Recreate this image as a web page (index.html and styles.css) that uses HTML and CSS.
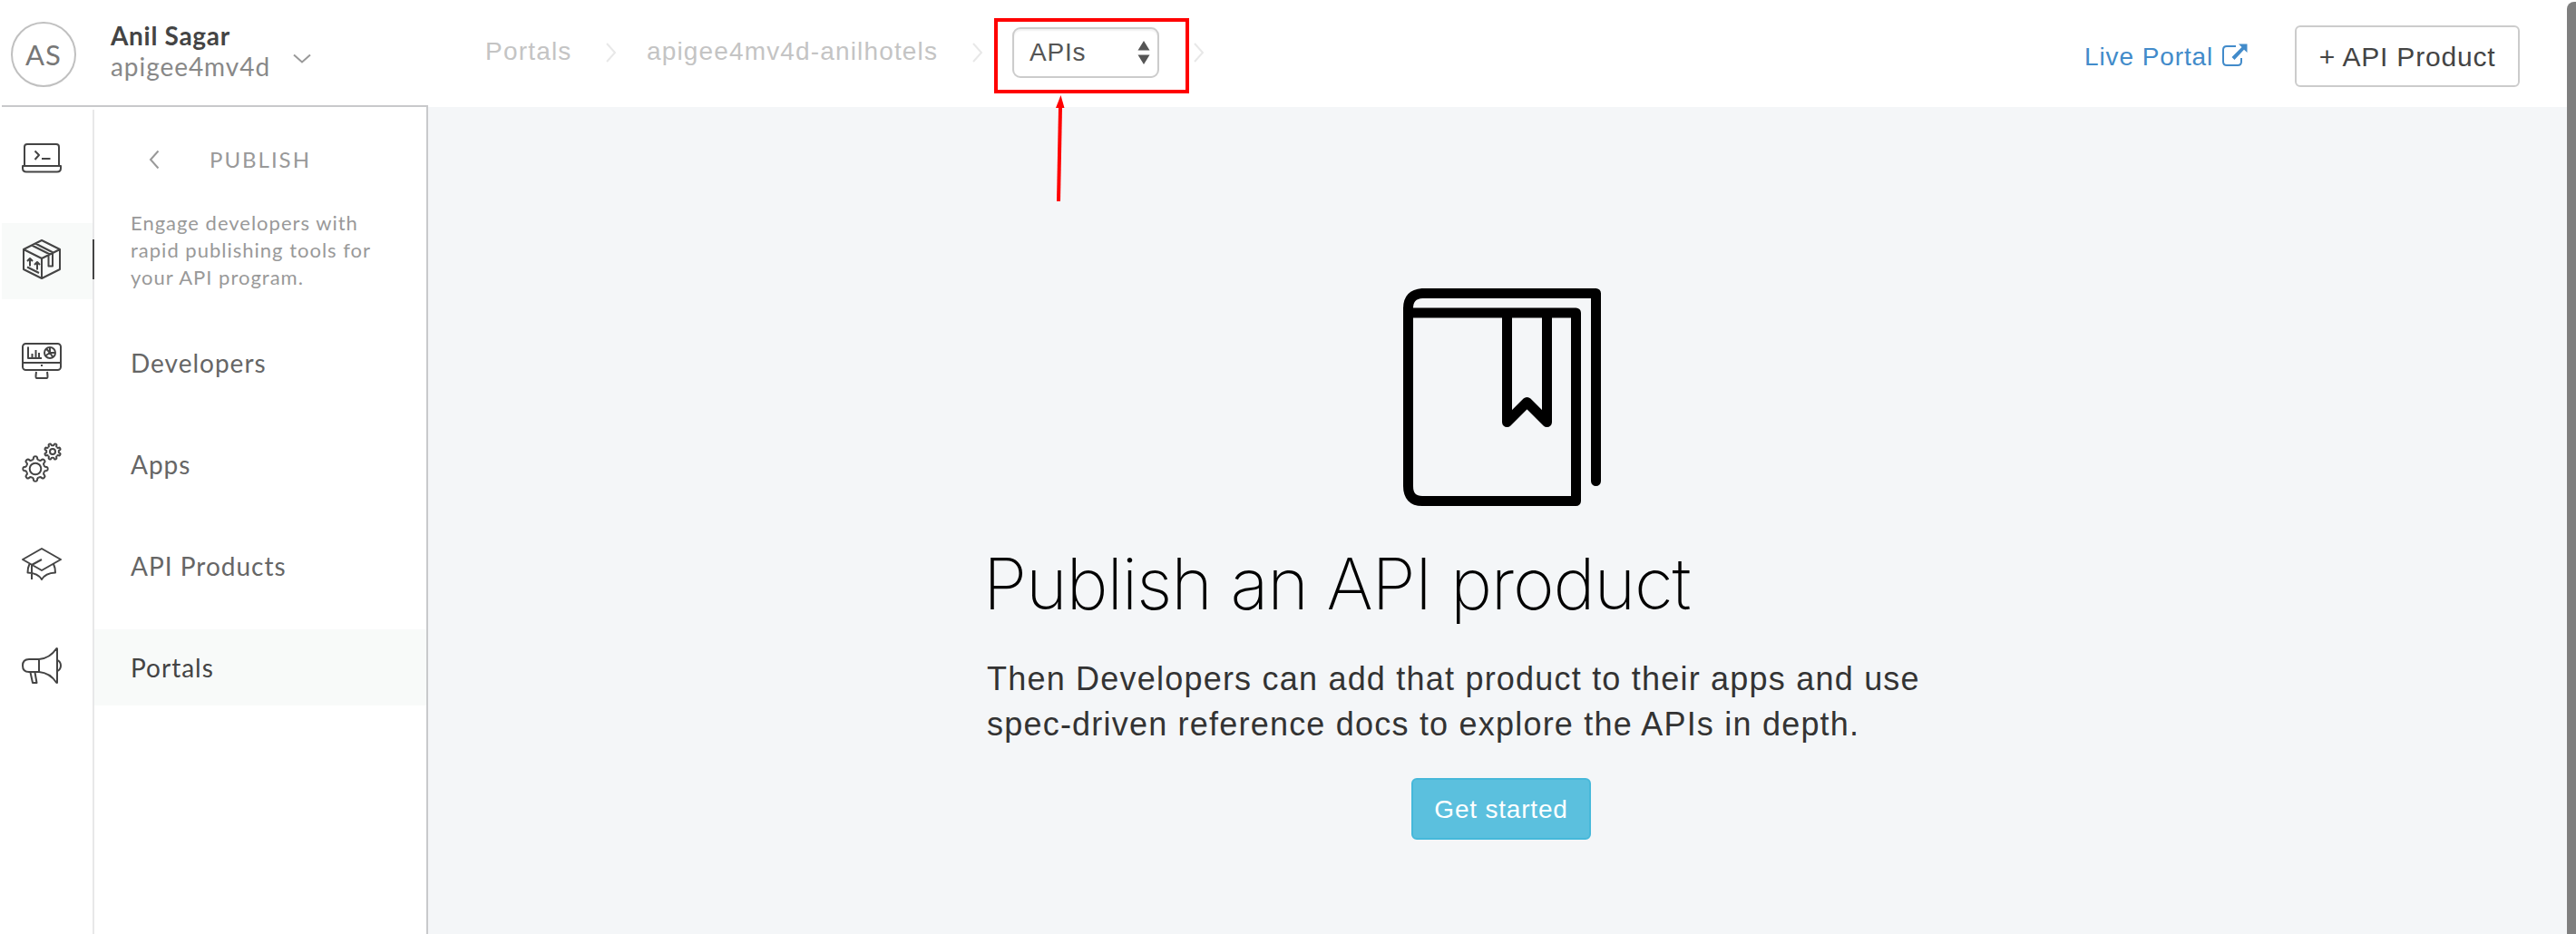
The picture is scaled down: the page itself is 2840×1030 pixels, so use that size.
FILE: index.html
```html
<!DOCTYPE html>
<html lang="en">
<head>
<meta charset="utf-8">
<title>Portals – APIs</title>
<link rel="stylesheet" href="styles.css">
</head>
<body>
<div class="app">
  <aside class="sidebar">
    <div class="account">
      <span class="avatar">AS</span>
      <div class="account-text">
        <strong class="account-name">Anil Sagar</strong>
        <span class="account-org">apigee4mv4d</span>
      </div>
      <svg class="account-caret" width="22" height="12" viewBox="0 0 22 12"><path d="M2 1.5 11 9.5 20 1.5"/></svg>
    </div>
    <div class="nav">
      <nav class="rail">
        <a class="rail-item"><svg class="icon" viewBox="0 0 44 44"><path d="M3 30V10q0-3 3-3h32q3 0 3 3v20M1 31h42v2.500q0 4-4 4H5q-4 0-4-4zM14.500 14.500l4.500 4.500-4.500 5M22 23h9.500"/></svg></a>
        <a class="rail-item rail-item-active"><svg class="icon" viewBox="0 0 44 44"><path d="M22 1 42 11v22L22 43 2 33V11zM2 11l20 10 20-10M22 21v22M11 6.500 31 16.500M15 4.500 34.500 14.500M29.500 17.500v12h4.500V15.500M9 29.500v-8M6 24l3-3 3 3M17 33.500v-8M14 28l3-3 3 3M6 30.500l13 6.500"/></svg></a>
        <a class="rail-item"><svg class="icon" viewBox="0 0 44 44"><rect x="1" y="3" width="42" height="29" rx="3.500"/><path d="M1 24h42M21 27h2M16 34q-1 7 0 7h12q1 0 0-7M7 6.500V19h15M11.500 18v-4M15.500 18v-8M19 18v-5"/><circle cx="31" cy="13" r="6"/><path d="M31 13V7M31 13h6M31 13l-5 3.500M31 13l3.500 5M31 13l-4-4.500"/></svg></a>
        <a class="rail-item"><svg class="icon" viewBox="0 0 44 44">
          <defs>
            <path id="tooth" d="M-3.900-9.500Q-2.600-10-2.300-10.600L-2-12.600Q-1.800-13.700 0-13.700 1.800-13.700 2-12.600L2.300-10.600Q2.600-10 3.900-9.500" vector-effect="non-scaling-stroke"/>
            <g id="gear"><use href="#tooth"/><use href="#tooth" transform="rotate(45)"/><use href="#tooth" transform="rotate(90)"/><use href="#tooth" transform="rotate(135)"/><use href="#tooth" transform="rotate(180)"/><use href="#tooth" transform="rotate(225)"/><use href="#tooth" transform="rotate(270)"/><use href="#tooth" transform="rotate(315)"/></g>
          </defs>
          <use href="#gear" transform="translate(15 29)"/><circle cx="15" cy="29" r="6.300"/>
          <use href="#gear" transform="translate(34 10) rotate(22.500) scale(.66)"/><circle cx="34" cy="10" r="3"/>
        </svg></a>
        <a class="rail-item"><svg class="icon" viewBox="0 0 44 44"><path d="M22 5 43 17 22 29 1 17zM22 17 11 23v16M8.500 22Q6.500 26 6.500 31.500 18 32 22 39q4-7 15-7.500 0-5.500-2-9.500"/></svg></a>
        <a class="rail-item"><svg class="icon" viewBox="0 0 44 44"><path d="M19 15H8q-7 0-7 7t7 7h11zM19 15Q31 14 38 3.500q1-1 1 0v37q0 1-1 0Q31 30 19 29M39.500 16q3.500 2 3.500 6t-3.500 6M9.500 29.500l2.500 11.500h4.500L14.500 29.500"/></svg></a>
      </nav>
      <div class="menu">
        <div class="menu-head">
          <svg class="menu-back" width="12" height="22" viewBox="0 0 12 22"><path d="M10.500 1.500 2 11l8.500 9.500"/></svg>
          <span class="menu-title">PUBLISH</span>
        </div>
        <p class="menu-desc">Engage developers with<br>rapid publishing tools for<br>your API program.</p>
        <div class="menu-list">
          <a class="menu-item">Developers</a>
          <a class="menu-item">Apps</a>
          <a class="menu-item">API Products</a>
          <a class="menu-item menu-item-active">Portals</a>
        </div>
      </div>
    </div>
  </aside>
  <div class="content">
    <header class="topbar">
      <div class="crumbs">
        <a class="crumb">Portals</a>
        <svg class="crumb-sep" viewBox="0 0 12 22"><path d="M1 1l9 10-9 10"/></svg>
        <a class="crumb crumb-slug">apigee4mv4d-anilhotels</a>
        <svg class="crumb-sep" viewBox="0 0 12 22"><path d="M1 1l9 10-9 10"/></svg>
        <div class="select">
          <span>APIs</span>
          <svg width="14" height="26" viewBox="0 0 14 26"><path d="M7 0l6.500 10.500H.5zM7 26l6.500-10.500H.5z" fill="#555"/></svg>
        </div>
        <svg class="crumb-sep" viewBox="0 0 12 22"><path d="M1 1l9 10-9 10"/></svg>
      </div>
      <div class="actions">
        <a class="live">Live Portal
          <svg class="live-icon" width="30" height="26" viewBox="0 0 30 26"><path d="M16 3H6Q2 3 2 7v13q0 4 4 4h12q4 0 4-4v-4" fill="none" stroke="#428bca" stroke-width="2"/><path d="M19 .5h9.500V10L25 6.700 14.500 18 11.500 15 22.500 4z" fill="#428bca"/></svg>
        </a>
        <button class="btn btn-outline">+ API Product</button>
      </div>
    </header>
    <main class="main">
      <section class="empty">
        <svg class="book" width="218" height="240" viewBox="0 0 218 240"><path d="M212.500 212.500V5.500H21Q5.500 6.500 5.500 22v196Q5.500 234.500 21 234.500H190.500V27H5.500M114.500 27V147.500L136.500 125.500 158.500 147.500V27"/></svg>
        <h1 class="empty-title">Publish an API product</h1>
        <p class="empty-text">Then Developers can add that product to their apps and use<br>spec-driven reference docs to explore the APIs in depth.</p>
        <button class="btn btn-info">Get started</button>
      </section>
    </main>
  </div>
  <div class="scrollbar"></div>
  <div class="callout"></div>
  <svg class="callout-arrow" width="14" height="120" viewBox="0 0 14 120"><path d="M6 117 8 14" stroke="#f00" stroke-width="4"/><path d="M8.500 0 12.500 14H3z" fill="#f00"/></svg>
</div>
</body>
</html>
```
FILE: styles.css
```css
* { box-sizing: border-box; }

body {
  margin: 0;
  background: #f4f6f8;
  font-family: "Liberation Sans", Arial, sans-serif;
}

svg { display: block; flex: none; }

.app {
  position: relative;
  display: flex;
  width: 2840px;
  height: 1030px;
  overflow: hidden;
}

/* Sidebar */
.sidebar {
  display: flex;
  flex-direction: column;
  width: 472px;
  padding-left: 2px;
  background: #fff;
  font-family: Lato, sans-serif;
}

.account {
  display: flex;
  align-items: flex-start;
  height: 118px;
  padding: 24px 0 0 10px;
  border-bottom: 2px solid #c8c9cb;
}

.avatar {
  width: 72px;
  height: 72px;
  border: 2px solid #c0c0c0;
  border-radius: 50%;
  color: #777;
  font-size: 31px;
  line-height: 68px;
  letter-spacing: 1px;
  text-align: center;
}

.account-text {
  display: flex;
  flex-direction: column;
  width: 200px;
  margin: -2px 0 0 38px;
  font-size: 28px;
  line-height: 34px;
}

.account-name { color: #444; letter-spacing: .7px; }
.account-org { color: #888; letter-spacing: .95px; }

.account-caret { margin-top: 35px; }
.account-caret path,
.menu-back path { fill: none; stroke: #999; stroke-width: 2; }

.nav {
  display: flex;
  flex: 1;
  border-right: 2px solid #c8c9cb;
}

.rail {
  display: flex;
  flex-direction: column;
  gap: 28px;
  width: 102px;
  margin-top: 3px;
  padding-top: 13px;
  border-right: 2px solid #e8e8e9;
}

.rail-item {
  display: flex;
  align-items: center;
  width: 102px;
  height: 84px;
  padding: 0 0 4px 22px;
}

.rail-item-active {
  background: linear-gradient(#444, #444) 100px 18px / 2px 44px no-repeat,
    linear-gradient(90deg, #f8faf9 100px, #e8e8e9 100px);
}

.icon {
  width: 44px;
  height: 44px;
  fill: none;
  stroke: #444;
  stroke-width: 2;
  stroke-linejoin: round;
}

.menu { flex: 1; }

.menu-head {
  display: flex;
  align-items: center;
  gap: 55px;
  height: 40px;
  margin-top: 38px;
  padding-left: 60px;
}

.menu-title { margin-top: -2px; color: #999; font-size: 24px; letter-spacing: 2px; }

.menu-desc {
  height: 90px;
  margin: 35px 0 37px 40px;
  color: #999;
  font-size: 22px;
  line-height: 30px;
  letter-spacing: 1px;
  white-space: nowrap;
}

.menu-list { display: flex; flex-direction: column; gap: 28px; }

.menu-item {
  height: 84px;
  padding-left: 40px;
  color: #666;
  font-size: 28px;
  line-height: 84px;
  letter-spacing: 1px;
}

.menu-item-active { background: #f8faf9; color: #444; }

/* Content */
.content {
  display: flex;
  flex: 1;
  flex-direction: column;
}

.topbar {
  display: flex;
  justify-content: space-between;
  height: 118px;
  padding: 0 62px 0 63px;
  background: #fff;
  white-space: nowrap;
}

.crumbs {
  display: flex;
  align-items: center;
  height: 116px;
  color: #c4c4c4;
  font-size: 28px;
}

.crumb { width: 133px; letter-spacing: 1.2px; line-height: 32px; margin-bottom: 2px; }
.crumb-slug { width: 326px; margin: 0 33px 2px 33px; letter-spacing: 1.15px; }

.crumb-sep {
  width: 12px;
  height: 22px;
  fill: none;
  stroke: #e8e8e8;
  stroke-width: 2;
}

.select {
  display: flex;
  align-items: center;
  justify-content: space-between;
  width: 162px;
  height: 56px;
  margin: 0 38px 0 32px;
  padding: 0 8px 0 17px;
  border: 2px solid #ccc;
  border-radius: 9px;
  background: #fff;
  box-shadow: inset 0 2px 2px rgba(0, 0, 0, .06);
  color: #555;
  letter-spacing: .8px;
}

.actions {
  display: flex;
  align-items: flex-start;
  padding-top: 28px;
}

.live {
  display: flex;
  width: 232px;
  padding-top: 19px;
  color: #428bca;
  font-size: 28px;
  line-height: 32px;
  letter-spacing: .9px;
}

.live-icon { margin: 1px 0 0 9px; }

.btn {
  height: 68px;
  padding: 0;
  border-radius: 6px;
  font-family: inherit;
}

.btn-outline {
  width: 248px;
  padding-top: 2px;
  border: 2px solid #ccc;
  background: #fff;
  color: #444;
  font-size: 30px;
  letter-spacing: .8px;
}

.main {
  display: flex;
  flex: 1;
  justify-content: center;
  padding-top: 200px;
}

.empty {
  display: flex;
  flex-direction: column;
  align-items: center;
  width: 1136px;
}

.book { fill: none; stroke: #000; stroke-width: 11; stroke-linejoin: round; stroke-linecap: round; }

.empty-title {
  align-self: flex-start;
  height: 96px;
  margin: 38px 0 0 -4px;
  color: #000;
  font-family: Inter, sans-serif;
  font-size: 78px;
  font-weight: 150;
  line-height: 96px;
  letter-spacing: -1.2px;
  white-space: nowrap;
}

.empty-text {
  align-self: flex-start;
  margin: 32px 0 0;
  color: #333;
  font-size: 36px;
  line-height: 50px;
  letter-spacing: 1.21px;
  white-space: nowrap;
}

.btn-info {
  width: 198px;
  margin: 34px 2px 0 0;
  padding-top: 2px;
  border: 2px solid #46b8da;
  background: #5bc0de;
  color: #fff;
  font-size: 28px;
  letter-spacing: .8px;
}

/* Overlays */
.scrollbar {
  position: absolute;
  top: 2px;
  right: 0;
  width: 10px;
  height: 1028px;
  border-radius: 8px 0 0 0;
  background: #7f7f7f;
}

.callout {
  position: absolute;
  top: 20px;
  left: 1096px;
  width: 215px;
  height: 83px;
  border: 4px solid #f00;
}

.callout-arrow { position: absolute; top: 105px; left: 1161px; }
```
